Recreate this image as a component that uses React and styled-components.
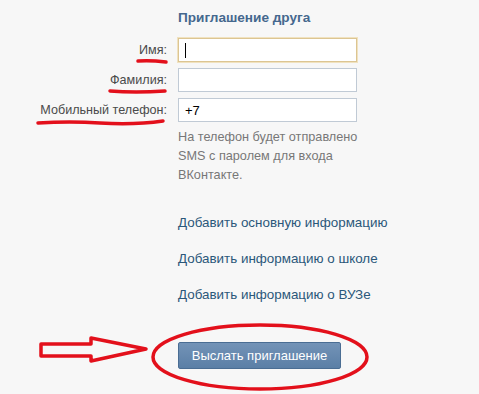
import styled, { createGlobalStyle } from 'styled-components';

const Global = createGlobalStyle`
  html, body {
    margin: 0;
    padding: 0;
    background: #f7f7f7;
  }
  body {
    font-family: "Liberation Sans", Tahoma, sans-serif;
  }
`;

const Page = styled.div`
  position: relative;
  width: 479px;
  height: 394px;
  overflow: hidden;
  background: #f7f7f7;
  padding-top: 9px;
  box-sizing: border-box;
`;

const Title = styled.h2`
  margin: 0 0 12px 178px;
  font-size: 13.6px;
  font-weight: bold;
  line-height: 17px;
  color: #45688e;
`;

const Form = styled.div`
  display: grid;
  grid-template-columns: 178px 179px;
  row-gap: 6px;
  align-items: center;
`;

const Label = styled.label`
  text-align: right;
  padding-right: 11px;
  font-size: 12.6px;
  color: #4a4a4a;
`;

const Field = styled.div`
  height: 24px;
  box-sizing: border-box;
  border: 1px solid ${p => (p.$focused ? '#dcc592' : '#c0cad5')};
  box-shadow: ${p => (p.$focused ? '0 0 0 1px #f0e2c0' : 'none')};
  background: #fff;
  display: flex;
  align-items: center;
  padding-left: 6px;
  font-size: 13px;
  color: #000;
`;

const Caret = styled.span`
  width: 1px;
  height: 15px;
  background: #000;
`;

const Right = styled.div`
  margin-left: 178px;
`;

const Hint = styled.div`
  margin-top: 6px;
  font-size: 12.7px;
  line-height: 19px;
  color: #777;
`;

const Links = styled.div`
  margin-top: 28px;
  display: flex;
  flex-direction: column;
  gap: 17px;
`;

const Link = styled.a`
  font-size: 13.4px;
  line-height: 19px;
  color: #2b587a;
  text-decoration: none;
`;

const Button = styled.button`
  margin-top: 38px;
  width: 163px;
  height: 27px;
  border: 1px solid #4a6d93;
  border-radius: 2px;
  background: linear-gradient(#7393b7, #5b7fa6);
  color: #fff;
  font-family: "Liberation Sans", Tahoma, sans-serif;
  font-size: 13px;
  padding: 0;
`;

const Marks = styled.svg`
  position: absolute;
  left: 0;
  top: 0;
  pointer-events: none;
`;

export default function App() {
  return (
    <Page>
      <Global />
      <Title>Приглашение друга</Title>
      <Form>
        <Label>Имя:</Label>
        <Field $focused>
          <Caret />
        </Field>
        <Label>Фамилия:</Label>
        <Field />
        <Label>Мобильный телефон:</Label>
        <Field>+7</Field>
      </Form>
      <Right>
        <Hint>
          На телефон будет отправлено
          <br />
          SMS с паролем для входа
          <br />
          ВКонтакте.
        </Hint>
        <Links>
          <Link>Добавить основную информацию</Link>
          <Link>Добавить информацию о школе</Link>
          <Link>Добавить информацию о ВУЗе</Link>
        </Links>
        <Button>Выслать приглашение</Button>
      </Right>
      <Marks width="479" height="394" viewBox="0 0 479 394">
        <g fill="none" stroke="#e3101b" strokeWidth="3.5" strokeLinecap="round" strokeLinejoin="round">
          <path d="M138 61 Q150 60 166 62" />
          <path d="M110 91 Q135 93 165 91" />
          <path d="M38 123 Q70 121 100 123 Q135 125 163 121" />
          <path d="M41 344 L91 344 L91 338 L146 349 L91 361 L91 356 L41 356 Z" />
          <ellipse cx="260" cy="357" rx="107" ry="32" />
        </g>
      </Marks>
    </Page>
  );
}
